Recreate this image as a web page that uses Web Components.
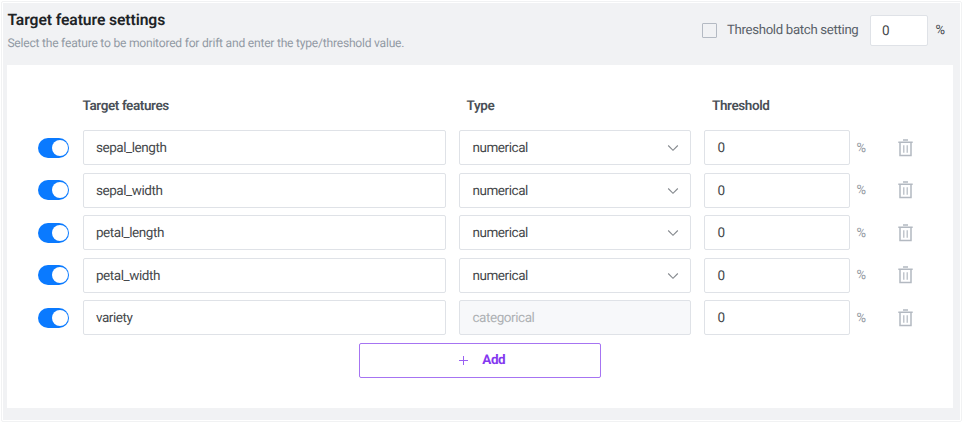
<!DOCTYPE html>
<html lang="en">
<head>
<meta charset="utf-8">
<title>Target feature settings</title>
<style>
html, body { margin: 0; height: 100%; background: #fff; }
body { font-family: Roboto, "Liberation Sans", sans-serif; font-size: 13px; color: #43484d; overflow: hidden; text-rendering: geometricPrecision; }
</style>
</head>
<body>
<settings-panel></settings-panel>
<script>
const define = (name, html) => {
  const template = document.createElement('template');
  template.innerHTML = html;
  customElements.define(name, class extends HTMLElement {
    constructor() {
      super();
      this.attachShadow({ mode: 'open' }).append(template.content.cloneNode(true));
    }
  });
};

define('toggle-switch', `
<style>
:host { display: block; box-sizing: border-box; width: 31px; height: 20px; padding: 2px; border-radius: 10px; background: #0a7aff; }
i { display: block; width: 16px; height: 16px; margin-left: auto; margin-right: -0.5px; border-radius: 50%; background: #fff; }
</style><i></i>`);

define('text-field', `
<style>
:host { display: flex; align-items: center; box-sizing: border-box; height: 35px; padding: 1px 12px 0 12px; border: 1px solid #dfe2e7; border-radius: 2px; background: #fff; font-size: 13.5px; letter-spacing: -0.43px; line-height: 20px; color: #45484b; }
:host([disabled]) { background: #f7f8fa; color: #aeb1b4; }
</style><slot></slot>`);

define('select-field', `
<style>
:host { display: block; }
text-field { justify-content: space-between; }
svg { display: block; width: 12px; height: 8px; margin-right: -1px; }
</style>
<text-field><span><slot></slot></span>
<svg viewBox="0 0 12 8" fill="none" stroke="#85898e" stroke-width="1.1"><path d="M1.2 1.5 6 6.3 10.8 1.5"/></svg></text-field>`);

define('trash-icon', `
<style>
:host { display: block; width: 15px; height: 18px; }
svg { display: block; }
</style>
<svg width="15" height="18" viewBox="0 0 15 18" fill="none" stroke="#b3b9c1"><path stroke-width="1.5" d="M5 .9h5M.3 3.2h14.4M2 3.2v13.2h11V3.2"/><path stroke-width="1.2" d="M5.8 6.3v7.4M9.2 6.3v7.4"/></svg>`);

define('check-box', `
<style>
:host { display: flex; align-items: center; gap: 10px; font-size: 13.2px; letter-spacing: -0.31px; line-height: 20px; color: #596068; }
i { box-sizing: border-box; width: 15px; height: 15px; border: 1px solid #b4bac3; border-radius: 1px; }
</style><i></i><span><slot></slot></span>`);

define('add-button', `
<style>
:host { display: flex; align-items: center; justify-content: center; gap: 14px; box-sizing: border-box; width: 241.8px; height: 35px; padding-left: 4px; border: 1px solid #a674f2; border-radius: 2px; background: #fff; color: #8438f0; font-size: 13.5px; letter-spacing: -0.4px; font-weight: 700; line-height: 20px; }
svg { display: block; width: 9px; height: 9px; }
</style>
<svg viewBox="0 0 9 9" stroke="#9a61f2" stroke-width="1"><path d="M0 4.5h9M4.5 0v9"/></svg><span><slot></slot></span>`);

define('feature-row', `
<style>
:host { display: grid; grid-template-columns: 31px 363px 232px 145px 9px 15px; column-gap: 13.5px; align-items: center; }
.unit { margin-left: -7px; padding-top: 2px; font-size: 13px; line-height: 20px; color: #8f969e; }
slot[name=action]::slotted(*) { margin-left: 12.5px; }
slot[name=threshold]::slotted(*) { margin-left: -0.5px; }
</style>
<slot name="toggle"></slot><slot name="name"></slot><slot name="type"></slot><slot name="threshold"></slot><span class="unit">%</span><slot name="action"></slot>`);

const rows = [['sepal_length', 'numerical'], ['sepal_width', 'numerical'], ['petal_length', 'numerical'], ['petal_width', 'numerical'], ['variety', 'categorical']];

define('settings-panel', `
<style>
:host { display: block; box-sizing: border-box; width: 961px; height: 421px; margin: 1px 0 0 1px; padding: 1px; border: 1px solid #f1f2f3; border-radius: 2px; }
.surface { box-sizing: border-box; height: 417px; padding: 0 7px 0 4.4px; background: #f1f2f4; display: flow-root; }
header { display: flex; justify-content: space-between; height: 62px; }
h2 { margin: 6.6px 0 0 0; font-size: 15.7px; letter-spacing: -0.1px; line-height: 20px; font-weight: 600; color: #202326; }
p { margin: 5.4px 0 0 0; font-size: 12.1px; letter-spacing: -0.23px; line-height: 16px; color: #929aa4; }
.batch { display: flex; align-items: center; height: 31px; margin: 12px 8px 0 0; }
.batch text-field { width: 58px; height: 31px; margin: 0 7px 0 12px; padding: 0 0 0 10.5px; }
.batch b { font-size: 13px; font-weight: 400; color: #43484d; }
main { box-sizing: border-box; height: 343px; padding: 31px 0 0 31px; background: #fff; }
.head { display: grid; grid-template-columns: 363px 232px 145px; column-gap: 13.5px; padding-left: 44.2px; margin-bottom: 14.3px; font-size: 13.5px; letter-spacing: -0.41px; font-weight: 600; line-height: 20px; color: #4a5057; }
.head span + span { padding-left: 7.5px; }
.rows { display: grid; row-gap: 7.5px; }
add-button { margin: 7.4px 0 0 321px; }
</style>
<div class="surface">
<header>
<div><h2>Target feature settings</h2><p>Select the feature to be monitored for drift and enter the type/threshold value.</p></div>
<div class="batch"><check-box>Threshold batch setting</check-box><text-field>0</text-field><b>%</b></div>
</header>
<main>
<div class="head"><span>Target features</span><span>Type</span><span>Threshold</span></div>
<div class="rows">${rows.map(([name, type]) => `<feature-row>
<toggle-switch slot="toggle"></toggle-switch><text-field slot="name">${name}</text-field>
${type === 'categorical' ? `<text-field slot="type" disabled>${type}</text-field>` : `<select-field slot="type">${type}</select-field>`}
<text-field slot="threshold">0</text-field><trash-icon slot="action"></trash-icon></feature-row>`).join('')}</div>
<add-button>Add</add-button>
</main>
</div>`);
</script>
</body>
</html>
